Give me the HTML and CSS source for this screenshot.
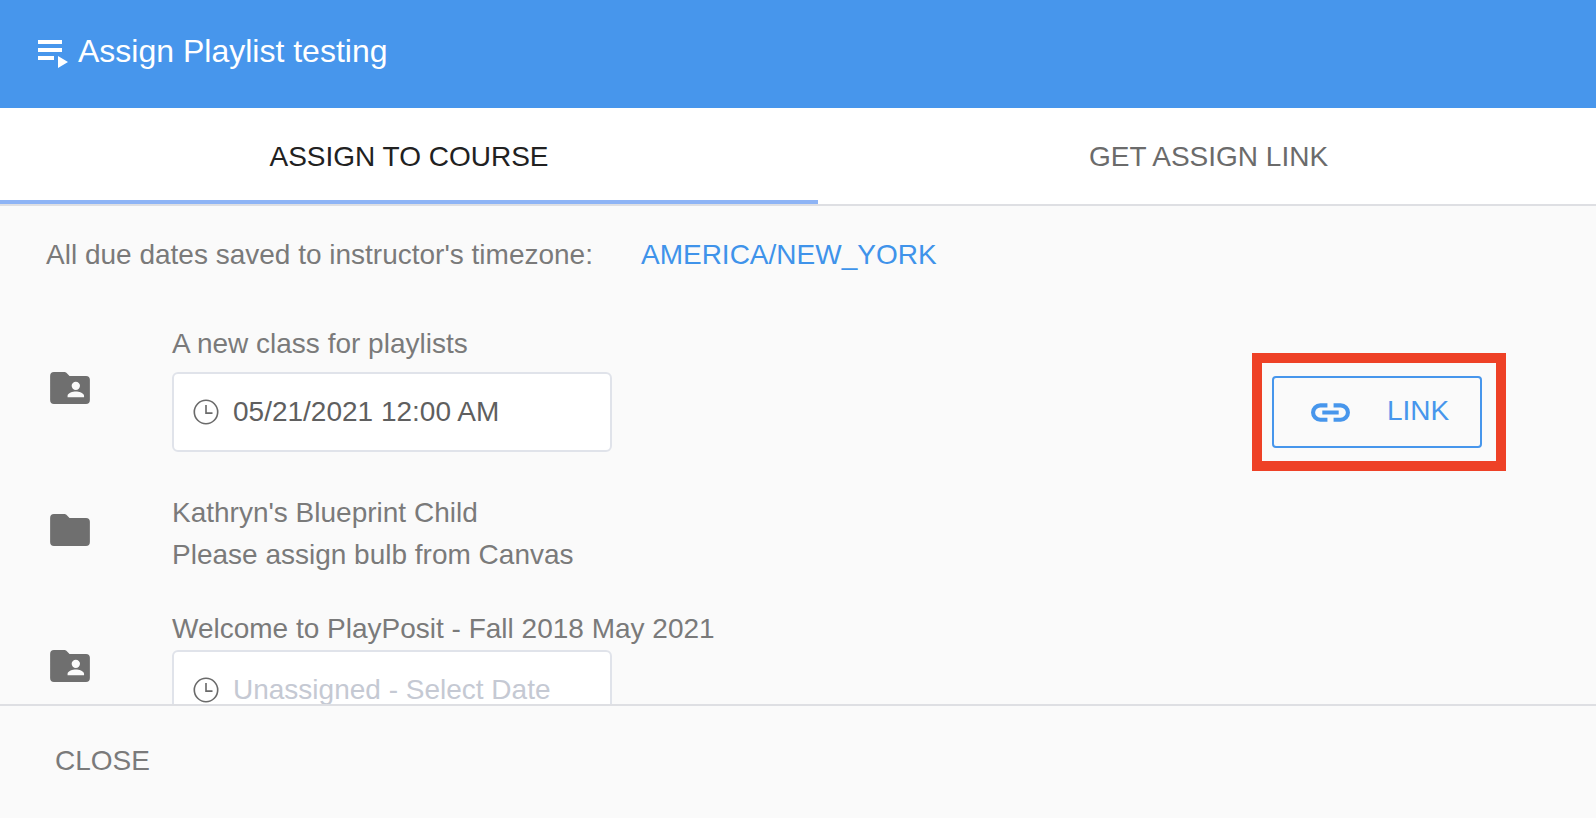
FILE: index.html
```html
<!DOCTYPE html>
<html lang="en">
<head>
<meta charset="utf-8">
<title>Assign Playlist testing</title>
<link rel="stylesheet" href="styles.css">
</head>
<body>
<div class="dialog">
  <header class="header">
    <svg class="playlist-icon" viewBox="0 0 30 28" aria-hidden="true"><path d="M0 0h24v4H0zM0 8h24v4H0zM0 16h16v4H0zM20 16l10 6-10 6z"/></svg>
    <span class="header-title">Assign Playlist testing</span>
  </header>
  <nav class="tabs">
    <div class="tab tab-active">ASSIGN TO COURSE</div>
    <div class="tab">GET ASSIGN LINK</div>
  </nav>
  <main class="content">
    <div class="timezone">
      <span>All due dates saved to instructor's timezone:</span>
      <span class="timezone-value">AMERICA/NEW_YORK</span>
    </div>
    <section class="row row-first">
      <svg class="folder" viewBox="0 0 41 33" aria-hidden="true"><path fill-rule="evenodd" d="M4 0h11a3 3 0 0 1 2.500 1.500L20 4h17a4 4 0 0 1 4 4v21a4 4 0 0 1-4 4H4a4 4 0 0 1-4-4V4a4 4 0 0 1 4-4zM26.500 10a4.300 4.300 0 1 0 0 8.600 4.300 4.300 0 0 0 0-8.600zM18 26h17v-1.500c0-3-5.500-4.500-8.500-4.500S18 21.500 18 24.500z"/></svg>
      <div class="row-body">
        <div class="course-name">A new class for playlists</div>
        <div class="date-field">
          <svg class="clock" viewBox="0 0 24 24" aria-hidden="true"><circle cx="12" cy="12" r="10.800"/><path d="M12 5.500V13h6"/></svg>
          <span class="date-value">05/21/2021 12:00 AM</span>
        </div>
      </div>
      <div class="highlight">
        <button class="link-button" type="button">
          <svg class="link-icon" viewBox="0 0 40 20" aria-hidden="true"><path d="M17 3H10a7 7 0 0 0 0 14h7M23 3h7a7 7 0 0 1 0 14h-7M12 10h16"/></svg>
          <span class="link-label">LINK</span>
        </button>
      </div>
    </section>
    <section class="row row-second">
      <svg class="folder" viewBox="0 0 41 33" aria-hidden="true"><path d="M4 0h11a3 3 0 0 1 2.500 1.500L20 4h17a4 4 0 0 1 4 4v21a4 4 0 0 1-4 4H4a4 4 0 0 1-4-4V4a4 4 0 0 1 4-4z"/></svg>
      <div class="row-body">
        <div class="course-name">Kathryn's Blueprint Child</div>
        <div class="course-name course-note">Please assign bulb from Canvas</div>
      </div>
    </section>
    <section class="row row-third">
      <svg class="folder" viewBox="0 0 41 33" aria-hidden="true"><path fill-rule="evenodd" d="M4 0h11a3 3 0 0 1 2.500 1.500L20 4h17a4 4 0 0 1 4 4v21a4 4 0 0 1-4 4H4a4 4 0 0 1-4-4V4a4 4 0 0 1 4-4zM26.500 10a4.300 4.300 0 1 0 0 8.600 4.300 4.300 0 0 0 0-8.600zM18 26h17v-1.500c0-3-5.500-4.500-8.500-4.500S18 21.500 18 24.500z"/></svg>
      <div class="row-body">
        <div class="course-name">Welcome to PlayPosit - Fall 2018 May 2021</div>
        <div class="date-field">
          <svg class="clock" viewBox="0 0 24 24" aria-hidden="true"><circle cx="12" cy="12" r="10.800"/><path d="M12 5.500V13h6"/></svg>
          <span class="date-placeholder">Unassigned - Select Date</span>
        </div>
      </div>
    </section>
  </main>
  <footer class="footer">
    <span class="close">CLOSE</span>
  </footer>
</div>
</body>
</html>
```
FILE: styles.css
```css
* { box-sizing: border-box; }
html, body { margin: 0; height: 100%; overflow: hidden; }
body {
  font-family: "Liberation Sans", Arial, sans-serif;
  background: #fafafa;
}
.dialog {
  display: flex;
  flex-direction: column;
  width: 1596px;
  height: 818px;
}
.header {
  display: flex;
  align-items: center;
  height: 108px;
  padding: 0 0 6px 38px;
  background: #4796ec;
  color: #fff;
  flex: none;
}
.playlist-icon {
  width: 30px;
  height: 28px;
  fill: #fff;
  margin-top: 6px;
  margin-right: 10px;
  flex: none;
}
.header-title {
  font-size: 32px;
  line-height: 36px;
}
.tabs {
  display: flex;
  height: 98px;
  background: #fff;
  border-bottom: 2px solid #dedfe3;
  flex: none;
}
.tab {
  display: flex;
  align-items: center;
  justify-content: center;
  font-size: 28px;
  color: #6b6b6b;
  height: 96px;
  padding-top: 5px;
  border-bottom: 4px solid transparent;
  flex: none;
}
.tab-active {
  width: 818px;
  color: #212121;
  border-bottom-color: #8eb4f5;
}
.tab:last-child { width: 778px; padding-left: 3px; }
.content {
  flex: 1;
  min-height: 0;
  overflow: hidden;
  padding: 33px 0 0 46px;
  color: #7a7a7a;
  font-size: 28px;
}
.timezone {
  display: flex;
  gap: 48px;
  line-height: 32px;
}
.timezone-value { color: #3f93ea; }
.row {
  display: flex;
  align-items: flex-start;
}
.row-first { margin-top: 57px; }
.row-second { margin-top: 26px; }
.row-third { margin-top: 42px; }
.folder {
  width: 40px;
  height: 32px;
  margin: 44px 0 0 4px;
  fill: #6f6f6f;
  flex: none;
}
.row-second .folder { margin-top: 17px; }
.row-third .folder { margin-top: 37px; }
.row-body {
  margin-left: 82px;
  width: 560px;
  flex: none;
}
.course-name { line-height: 32px; }
.course-note { margin-top: 10px; }
.date-field {
  display: flex;
  align-items: center;
  gap: 14px;
  width: 440px;
  height: 80px;
  margin-top: 12px;
  padding-left: 19px;
  background: #fff;
  border: 2px solid #e0e3ea;
  border-radius: 6px;
}
.row-third .date-field { margin-top: 5px; }
.clock {
  width: 26px;
  height: 26px;
  fill: none;
  stroke: #6a6a6a;
  stroke-width: 1.500;
  flex: none;
}
.date-value { color: #5f5f5f; font-size: 28px; }
.date-placeholder { color: #c5c9d3; font-size: 28px; }
.highlight {
  margin: 25px 90px 0 auto;
  padding: 13px 14px 13px 10px;
  border: 10px solid #ee4126;
  flex: none;
}
.link-button {
  display: flex;
  align-items: center;
  justify-content: flex-start;
  width: 210px;
  height: 72px;
  padding: 0 0 0 36px;
  background: transparent;
  border: 2px solid #4796ec;
  border-radius: 4px;
  color: #4796ec;
  font: inherit;
  font-size: 28px;
}
.link-icon {
  width: 41px;
  height: 21px;
  fill: none;
  stroke: #4796ec;
  stroke-width: 4;
  margin-right: 36px;
  flex: none;
}
.link-label { padding-bottom: 3px; }
.footer {
  display: flex;
  align-items: center;
  height: 114px;
  padding: 0 0 3px 55px;
  background: #fafafa;
  border-top: 2px solid #dedfe3;
  flex: none;
}
.close { color: #7a7a7a; font-size: 28px; }
```
